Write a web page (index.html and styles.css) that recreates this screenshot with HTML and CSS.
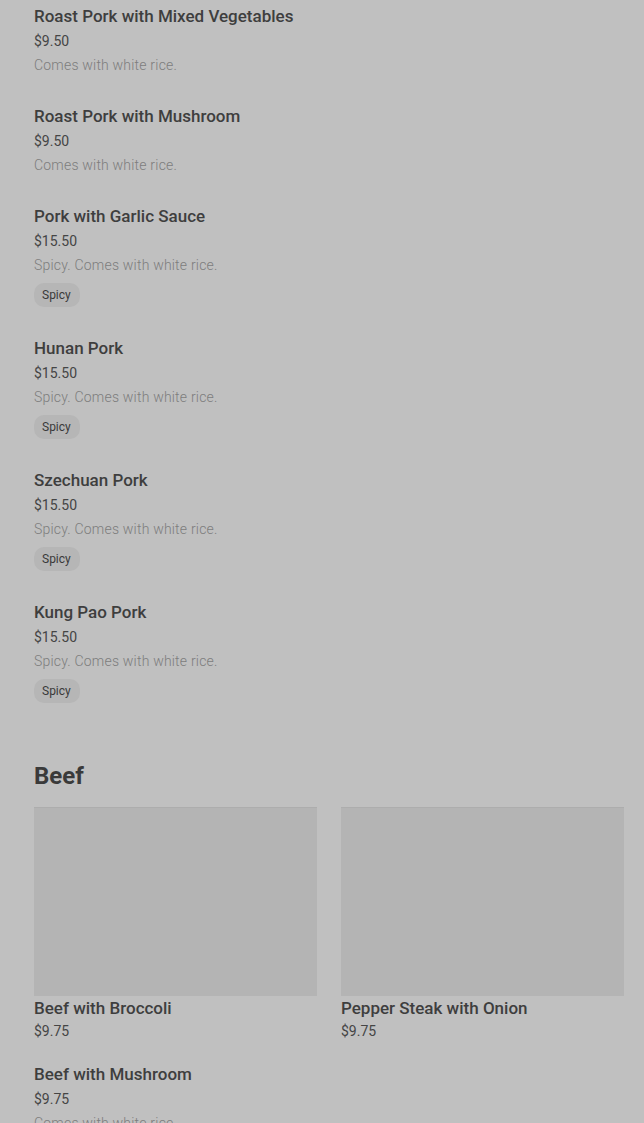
FILE: index.html
```html
<!DOCTYPE html>
<html lang="en">
<head>
<meta charset="utf-8">
<title>Menu</title>
<link rel="stylesheet" href="styles.css">
</head>
<body>
<main class="menu">
  <section class="list">
    <article class="item">
      <h3 class="name">Roast Pork with Mixed Vegetables</h3>
      <div class="price">$9.50</div>
      <p class="desc">Comes with white rice.</p>
    </article>
    <article class="item">
      <h3 class="name">Roast Pork with Mushroom</h3>
      <div class="price">$9.50</div>
      <p class="desc">Comes with white rice.</p>
    </article>
    <article class="item">
      <h3 class="name">Pork with Garlic Sauce</h3>
      <div class="price">$15.50</div>
      <p class="desc">Spicy. Comes with white rice.</p>
      <span class="tag">Spicy</span>
    </article>
    <article class="item">
      <h3 class="name">Hunan Pork</h3>
      <div class="price">$15.50</div>
      <p class="desc">Spicy. Comes with white rice.</p>
      <span class="tag">Spicy</span>
    </article>
    <article class="item">
      <h3 class="name">Szechuan Pork</h3>
      <div class="price">$15.50</div>
      <p class="desc">Spicy. Comes with white rice.</p>
      <span class="tag">Spicy</span>
    </article>
    <article class="item">
      <h3 class="name">Kung Pao Pork</h3>
      <div class="price">$15.50</div>
      <p class="desc">Spicy. Comes with white rice.</p>
      <span class="tag">Spicy</span>
    </article>
  </section>

  <section class="category">
    <h2 class="cat-title">Beef</h2>
    <div class="grid">
      <article class="card">
        <div class="photo"></div>
        <h3 class="name">Beef with Broccoli</h3>
        <div class="price">$9.75</div>
      </article>
      <article class="card">
        <div class="photo"></div>
        <h3 class="name">Pepper Steak with Onion</h3>
        <div class="price">$9.75</div>
      </article>
    </div>
    <article class="item">
      <h3 class="name">Beef with Mushroom</h3>
      <div class="price">$9.75</div>
      <p class="desc">Comes with white rice.</p>
    </article>
  </section>
</main>
</body>
</html>
```

FILE: styles.css
```css
html, body {
  margin: 0;
  padding: 0;
  background: #c0c0c0;
}
body {
  font-family: Roboto, "Noto Sans", "Liberation Sans", sans-serif;
  color: #3b3b3b;
  overflow: hidden;
}
.menu {
  padding: 5px 20px 0 34px;
}
.list {
  display: flex;
  flex-direction: column;
}
.item {
  display: flex;
  flex-direction: column;
  align-items: flex-start;
  padding-bottom: 30px;
}
.name {
  margin: 0;
  font-size: 17px;
  font-weight: 500;
  line-height: 22px;
  color: #3e3e3e;
}
.price {
  margin-top: 4px;
  font-size: 14px;
  line-height: 20px;
  color: #454545;
}
.desc {
  margin: 4px 0 0;
  font-size: 14px;
  line-height: 20px;
  color: #7d7d7d;
  font-weight: 300;
  letter-spacing: 0.2px;
}
.tag {
  margin-top: 8px;
  padding: 2px 9px 2px 8px;
  font-size: 12px;
  line-height: 20px;
  border-radius: 10px;
  background: #b6b6b6;
  color: #3a3a3a;
}
.category {
  padding-top: 28px;
}
.cat-title {
  margin: 0;
  font-size: 24px;
  font-weight: 700;
  line-height: 30px;
  color: #3a3a3a;
}
.grid {
  margin-top: 16px;
  display: grid;
  grid-template-columns: 1fr 1fr;
  gap: 24px;
}
.card {
  display: flex;
  flex-direction: column;
  padding-bottom: 22px;
}
.photo {
  height: 188px;
  background: #b4b4b4;
  border-top: 1px solid #adadad;
  margin-bottom: 1px;
}
.card .price {
  margin-top: 2px;
}
```
